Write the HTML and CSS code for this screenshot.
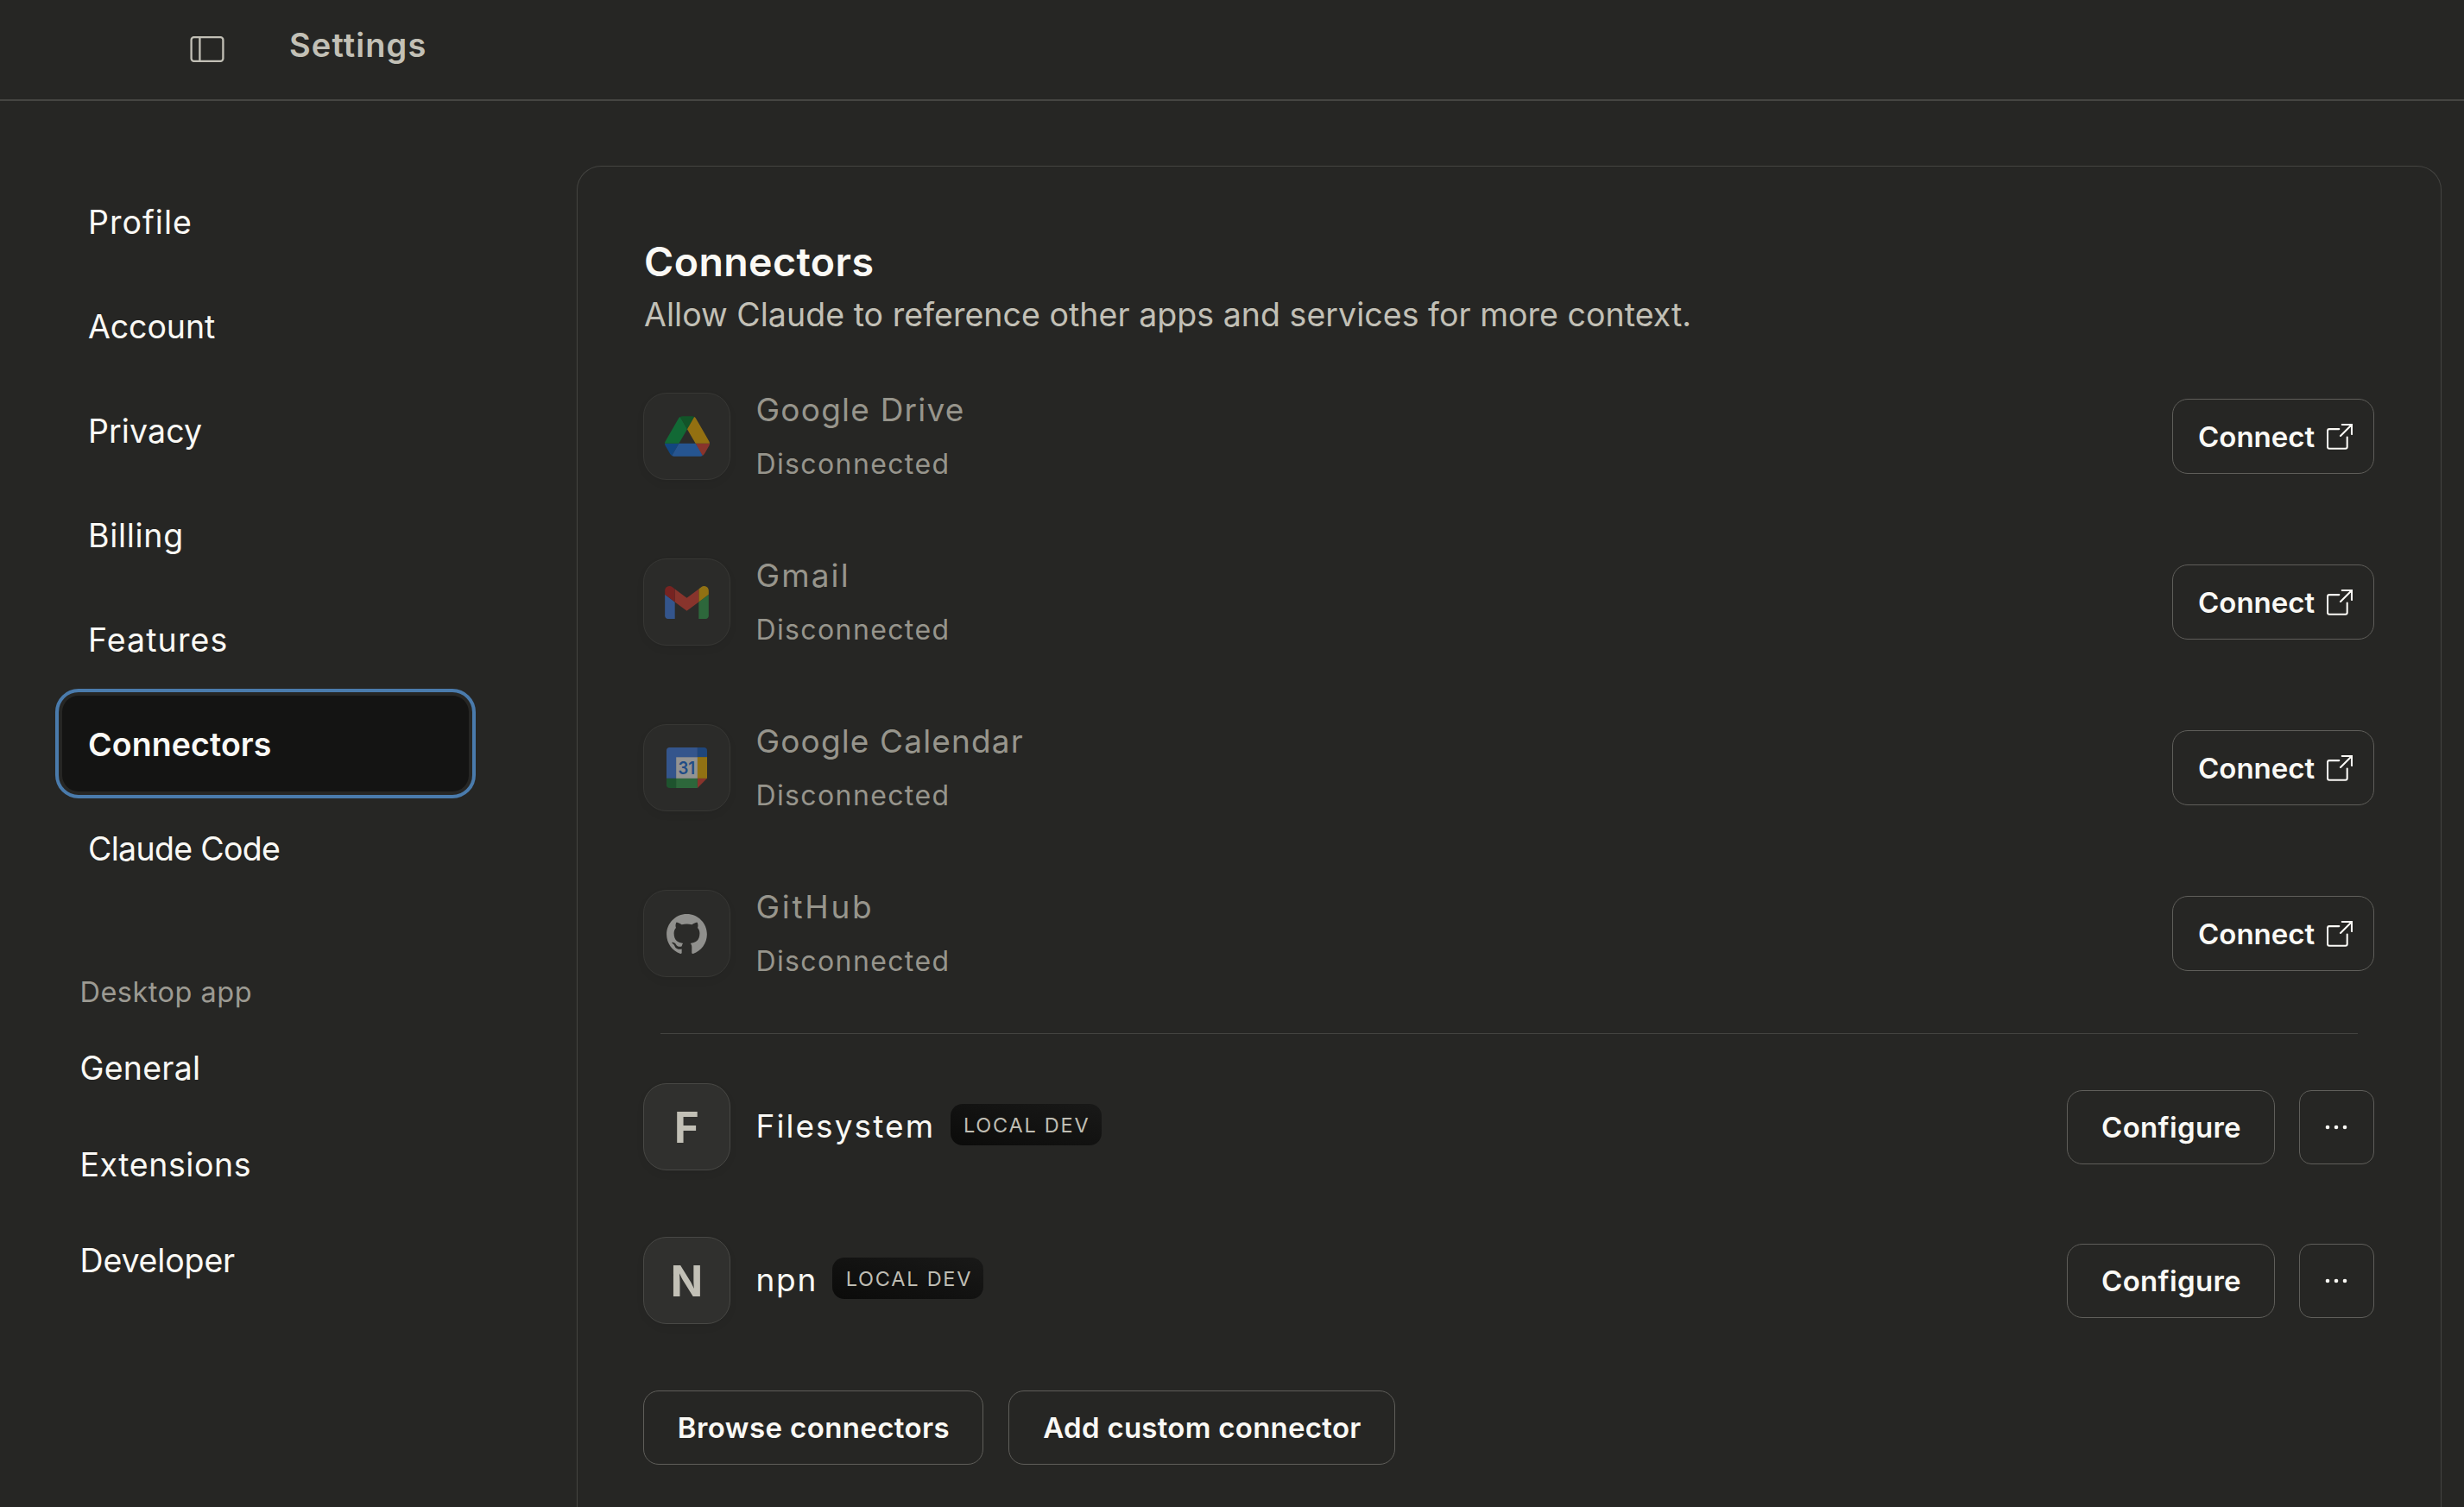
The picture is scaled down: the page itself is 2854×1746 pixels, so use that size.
FILE: index.html
```html
<!DOCTYPE html>
<html lang="en">
<head>
<meta charset="utf-8">
<title>Settings</title>
<link rel="stylesheet" href="styles.css">
</head>
<body>
<svg class="defs" width="0" height="0" aria-hidden="true">
  <symbol id="external" viewBox="0 0 30 30">
    <path d="M14.3 6.1H3a2 2 0 0 0-2 2V26.7a2 2 0 0 0 2 2h18.7a2 2 0 0 0 2-2V15.5M16 14 29 1M17.8 1H29v11" fill="none" stroke="currentColor" stroke-width="2.1" stroke-linecap="round"/>
  </symbol>
  <symbol id="dots" viewBox="0 0 26 6">
    <circle cx="3" cy="3" r="2.3" fill="currentColor"/><circle cx="13" cy="3" r="2.3" fill="currentColor"/><circle cx="23" cy="3" r="2.3" fill="currentColor"/>
  </symbol>
</svg>

<header class="topbar">
  <svg class="panel-icon" viewBox="0 0 40 30" fill="none" stroke="currentColor" stroke-width="2.3">
    <rect x="1.6" y="1.2" width="36.8" height="27.6" rx="3"/><path d="M11.4 1v28"/>
  </svg>
  <h1 class="topbar-title">Settings</h1>
</header>

<div class="layout">
  <aside class="sidebar">
    <nav class="nav">
      <a class="nav-item profile">Profile</a>
      <a class="nav-item account">Account</a>
      <a class="nav-item privacy">Privacy</a>
      <a class="nav-item billing">Billing</a>
      <a class="nav-item features">Features</a>
      <a class="nav-item active">Connectors</a>
      <a class="nav-item claude-code">Claude Code</a>
    </nav>
    <nav class="desktop-nav">
      <div class="group-label">Desktop app</div>
      <a class="desktop-item general">General</a>
      <a class="desktop-item extensions">Extensions</a>
      <a class="desktop-item developer">Developer</a>
    </nav>
  </aside>

  <main class="card">
    <div class="card-head">
      <h2>Connectors</h2>
      <p>Allow Claude to reference other apps and services for more context.</p>
    </div>

    <div class="services">
      <div class="row">
        <div class="tile dimmed">
          <svg width="52" height="47" viewBox="0 0 87.3 78">
            <path d="m6.6 66.85 3.85 6.65c.8 1.4 1.95 2.5 3.3 3.3l13.75-23.8h-27.5c0 1.55.4 3.1 1.2 4.5z" fill="#0066da"/>
            <path d="m43.65 25-13.75-23.8c-1.35.8-2.5 1.9-3.3 3.3l-25.4 44a9.06 9.06 0 0 0-1.2 4.5h27.5z" fill="#00ac47"/>
            <path d="m73.55 76.8c1.35-.8 2.5-1.9 3.3-3.3l1.6-2.75 7.65-13.25c.8-1.4 1.2-2.95 1.2-4.5h-27.5l5.85 11.5z" fill="#ea4335"/>
            <path d="m43.65 25 13.75-23.8c-1.35-.8-2.9-1.2-4.5-1.2h-18.5c-1.6 0-3.15.45-4.5 1.2z" fill="#00832d"/>
            <path d="m59.8 53h-32.3l-13.75 23.8c1.35.8 2.9 1.2 4.5 1.2h50.8c1.6 0 3.15-.45 4.5-1.2z" fill="#2684fc"/>
            <path d="m73.4 26.5-12.7-22c-.8-1.4-1.95-2.5-3.3-3.3l-13.75 23.8 16.15 28h27.45c0-1.55-.4-3.1-1.2-4.5z" fill="#ffba00"/>
          </svg>
        </div>
        <div class="info"><div class="name drive">Google Drive</div><div class="status">Disconnected</div></div>
        <button class="btn connect">Connect<svg width="30" height="30"><use href="#external"/></svg></button>
      </div>
      <div class="row">
        <div class="tile dimmed">
          <svg width="51" height="38" viewBox="52 42 88 66">
            <path fill="#4285f4" d="M58 108h14V74L52 59v43c0 3.32 2.69 6 6 6"/>
            <path fill="#34a853" d="M120 108h14c3.32 0 6-2.69 6-6V59l-20 15"/>
            <path fill="#fbbc04" d="M120 48v26l20-15v-8c0-7.42-8.47-11.65-14.4-7.2"/>
            <path fill="#ea4335" d="M72 74V48l24 18 24-18v26L96 92"/>
            <path fill="#c5221f" d="M52 51v8l20 15V48l-5.6-4.2c-5.94-4.45-14.4-.22-14.4 7.2"/>
          </svg>
        </div>
        <div class="info"><div class="name gmail">Gmail</div><div class="status">Disconnected</div></div>
        <button class="btn connect">Connect<svg width="30" height="30"><use href="#external"/></svg></button>
      </div>
      <div class="row">
        <div class="tile dimmed">
          <svg width="47" height="47" viewBox="0 0 200 200">
            <path fill="#fff" d="M47 47h106v106H47z"/>
            <path fill="#ea4335" d="M152.6 200 200 152.6h-47.4z"/>
            <path fill="#188038" d="M0 152.6v31.6A15.8 15.8 0 0 0 15.8 200h31.6v-47.4z"/>
            <path fill="#1967d2" d="M200 47.4V15.8A15.8 15.8 0 0 0 184.2 0h-31.6v47.4z"/>
            <path fill="#fbbc04" d="M152.6 47.4H200v105.2h-47.4z"/>
            <path fill="#34a853" d="M47.4 152.6h105.2V200H47.4z"/>
            <path fill="#4285f4" d="M152.6 0H15.8A15.8 15.8 0 0 0 0 15.8v136.8h47.4V47.4h105.2z"/>
            <text class="cal-day" x="99" y="132" text-anchor="middle" textLength="84" lengthAdjust="spacingAndGlyphs">31</text>
          </svg>
        </div>
        <div class="info"><div class="name calendar">Google Calendar</div><div class="status">Disconnected</div></div>
        <button class="btn connect">Connect<svg width="30" height="30"><use href="#external"/></svg></button>
      </div>
      <div class="row">
        <div class="tile dimmed">
          <svg width="47" height="46" viewBox="0 0 97.7 96">
            <path fill="#faf9f5" d="M48.854 0C21.839 0 0 22 0 49.217c0 21.756 13.993 40.172 33.405 46.69 2.427.49 3.316-1.059 3.316-2.362 0-1.141-.08-5.052-.08-9.127-13.59 2.934-16.42-5.867-16.42-5.867-2.184-5.704-5.42-7.17-5.42-7.17-4.448-3.015.324-3.015.324-3.015 4.934.326 7.523 5.052 7.523 5.052 4.367 7.496 11.404 5.378 14.235 4.074.404-3.178 1.699-5.378 3.074-6.6-10.839-1.141-22.243-5.378-22.243-24.283 0-5.378 1.94-9.778 5.014-13.2-.485-1.222-2.184-6.275.486-13.038 0 0 4.125-1.304 13.426 5.052a46.97 46.97 0 0 1 12.214-1.63c4.125 0 8.33.571 12.213 1.63 9.302-6.356 13.427-5.052 13.427-5.052 2.67 6.763.97 11.816.485 13.038 3.155 3.422 5.015 7.822 5.015 13.2 0 18.905-11.404 23.06-22.324 24.283 1.78 1.548 3.316 4.481 3.316 9.126 0 6.6-.08 11.897-.08 13.526 0 1.304.89 2.853 3.316 2.364 19.412-6.52 33.405-24.935 33.405-46.691C97.707 22 75.788 0 48.854 0z"/>
          </svg>
        </div>
        <div class="info"><div class="name github">GitHub</div><div class="status">Disconnected</div></div>
        <button class="btn connect">Connect<svg width="30" height="30"><use href="#external"/></svg></button>
      </div>
    </div>

    <hr class="divider">

    <div class="locals">
      <div class="row">
        <div class="tile letter">F</div>
        <div class="local-name filesystem">Filesystem</div>
        <span class="badge">LOCAL DEV</span>
        <div class="actions">
          <button class="btn configure">Configure</button>
          <button class="btn more"><svg width="26" height="6"><use href="#dots"/></svg></button>
        </div>
      </div>
      <div class="row">
        <div class="tile letter">N</div>
        <div class="local-name npn">npn</div>
        <span class="badge">LOCAL DEV</span>
        <div class="actions">
          <button class="btn configure">Configure</button>
          <button class="btn more"><svg width="26" height="6"><use href="#dots"/></svg></button>
        </div>
      </div>
    </div>

    <div class="footer-actions">
      <button class="btn browse">Browse connectors</button>
      <button class="btn add">Add custom connector</button>
    </div>
  </main>
</div>
</body>
</html>
```

FILE: styles.css
```css
* { box-sizing: border-box; }

html, body { height: 100%; }

body {
  margin: 0;
  display: flex;
  flex-direction: column;
  overflow: hidden;
  background: #262624;
  color: #faf9f5;
  font-family: Inter, "Liberation Sans", sans-serif;
  font-size: 37.5px;
}

h1, h2, p { margin: 0; }

.defs { display: block; flex: none; }

/* Top bar */
.topbar {
  flex: none;
  display: flex;
  align-items: flex-start;
  gap: 75px;
  height: 117px;
  padding: 25px 0 0 220px;
  border-bottom: 2px solid #454542;
  color: #c2c0b6;
}
.panel-icon { width: 40px; height: 30px; margin-top: 17px; }
.topbar-title { font-size: 38px; line-height: 55px; font-weight: 600; letter-spacing: 1.1px; }

.layout { flex: 1; display: flex; min-height: 0; }

/* Sidebar */
.sidebar { flex: none; width: 668px; padding-top: 84px; }
.nav { display: flex; flex-direction: column; gap: 10px; width: 543px; padding-left: 72px; }
.nav-item { height: 111px; line-height: 114px; padding-left: 30px; border-radius: 19px; white-space: nowrap; }
.nav-item.active {
  background: #141413;
  outline: 4px solid #4a7bac;
  outline-offset: 4px;
  font-weight: 600;
  letter-spacing: 0.1px;
}
.profile { letter-spacing: 1px; }
.account { letter-spacing: -0.1px; }
.privacy { letter-spacing: 0.1px; }
.billing { letter-spacing: 0.7px; }
.features { letter-spacing: 1.1px; }
.claude-code { letter-spacing: -0.69px; }

.desktop-nav { padding: 80px 0 0 92.5px; }
.group-label { font-size: 32.5px; line-height: 64px; letter-spacing: 0.48px; color: #9c9a92; }
.desktop-item { display: block; line-height: 111.5px; }
.general { letter-spacing: 0.25px; }
.extensions { letter-spacing: 0.55px; }
.developer { letter-spacing: -0.15px; }

/* Card */
.card {
  width: 2160px;
  margin-top: 75px;
  padding: 80px 77px 0 76px;
  border: 1px solid #444441;
  border-bottom: 0;
  border-radius: 28px 28px 0 0;
}
.card-head { padding-left: 1px; }
.card-head h2 { font-size: 46.5px; line-height: 60px; font-weight: 600; letter-spacing: 0.4px; }
.card-head p { margin-top: 2px; line-height: 60px; letter-spacing: 0.04px; color: #c2c0b6; }

.services { display: flex; flex-direction: column; gap: 91px; margin-top: 60px; }
.locals { display: flex; flex-direction: column; gap: 77px; margin-top: 57px; }
.row { display: flex; align-items: center; height: 101px; }

.tile {
  flex: none;
  display: flex;
  align-items: center;
  justify-content: center;
  width: 101px;
  height: 101px;
  margin-right: 29.5px;
  border: 1px solid #484845;
  border-radius: 27px;
  background: #30302e;
  box-shadow: 0 4px 10px rgba(0, 0, 0, 0.05);
}
.dimmed { opacity: 0.5; }
.letter { font-size: 49px; font-weight: 700; color: #c2c0b6; padding-top: 2px; }
.cal-day { font-size: 85px; font-weight: 600; fill: #1a73e8; }

.info { padding-top: 2px; }
.name { font-size: 37px; line-height: 50px; color: #97958c; }
.status { margin-top: 12px; font-size: 32px; line-height: 51px; letter-spacing: 1.38px; color: #97958c; }
.drive { letter-spacing: 1.22px; }
.gmail { letter-spacing: 2.1px; }
.calendar { letter-spacing: 1.14px; }
.github { letter-spacing: 2.7px; }

.local-name { font-size: 37px; line-height: 50px; margin-right: 17.5px; padding-bottom: 2px; }
.filesystem { letter-spacing: 2.07px; }
.npn { letter-spacing: 1.7px; }

.badge {
  width: 175px;
  height: 48px;
  margin-bottom: 5px;
  padding-left: 2px;
  border-radius: 14px;
  background: linear-gradient(to top right, #0b0b0a, #191918);
  color: #bfbdb3;
  font-size: 23.5px;
  line-height: 49px;
  text-align: center;
  letter-spacing: 1.75px;
}

/* Buttons */
.btn {
  display: flex;
  align-items: center;
  justify-content: center;
  height: 86px;
  padding: 0;
  border: 1px solid #5f5e5a;
  border-radius: 18px;
  background: transparent;
  color: #faf9f5;
  font: 600 33px Inter, "Liberation Sans", sans-serif;
  white-space: nowrap;
}
.connect { width: 234px; height: 87px; margin-left: auto; padding: 0 24px 0 29px; justify-content: space-between; }
.actions { display: flex; gap: 28px; margin-left: auto; padding-top: 1px; }
.configure { width: 241px; padding-left: 1px; letter-spacing: 0.32px; }
.more { width: 87px; padding-right: 1px; border-radius: 14px; }

.divider { height: 1px; margin: 65px 19px 0 20px; border: 0; background: #444441; }

.footer-actions { display: flex; gap: 29px; margin-top: 77px; }
.browse { width: 394px; padding-left: 1px; letter-spacing: 0.4px; }
.add { width: 448px; padding-left: 1px; letter-spacing: 0.27px; }
```
